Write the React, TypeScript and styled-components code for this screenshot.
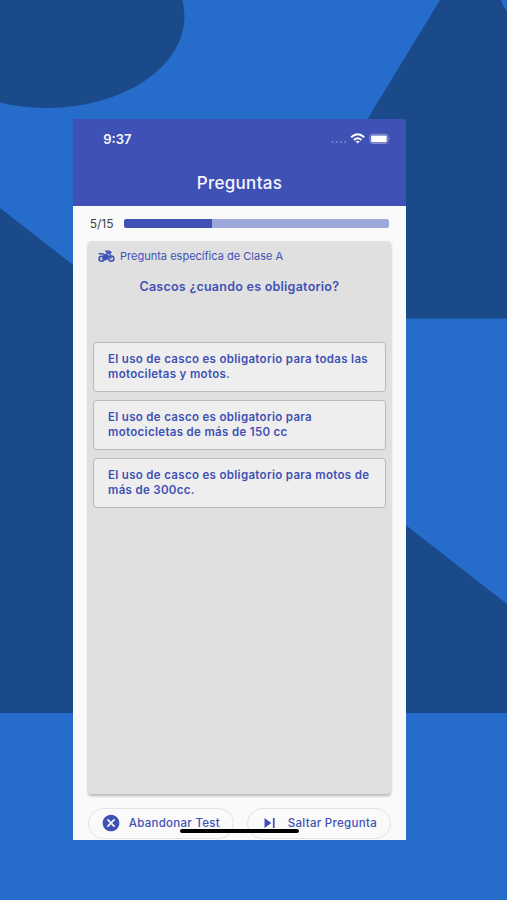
import React from "react";
import styled, { createGlobalStyle } from "styled-components";
import { MdCancel } from "react-icons/md";

const GlobalStyle = createGlobalStyle`
  * { box-sizing: border-box; }
  body { margin: 0; font-family: Inter, "Liberation Sans", sans-serif; }
`;

const indigo = "#3f51b5";

const Page = styled.main`
  position: relative;
  width: 507px;
  height: 900px;
  overflow: hidden;
  padding: 118.5px 0 0 72.7px;
  background: #266ccb;
`;

const Backdrop = styled.svg`
  position: absolute;
  inset: 0;
`;

const Phone = styled.section`
  position: relative;
  display: flex;
  flex-direction: column;
  width: 333.6px;
  height: 721.5px;
  overflow: hidden;
  background: #fafafa;
`;

const Header = styled.header`
  flex: none;
  height: 87.5px;
  background: ${indigo};
  color: #f5f6ff;
`;

const StatusBar = styled.div`
  display: flex;
  align-items: center;
  justify-content: space-between;
  height: 41px;
  padding: 0 16px 0 30.5px;
`;

const Clock = styled.span`
  font-size: 13px;
  font-weight: 600;
`;

const Title = styled.h1`
  margin: 12px 0 0;
  text-align: center;
  font-size: 17px;
  line-height: 22px;
  font-weight: 500;
  letter-spacing: 0.3px;
`;

const ProgressRow = styled.div`
  display: flex;
  align-items: center;
  flex: none;
  height: 35px;
  padding: 0 16.8px 0 17px;
`;

const Count = styled.span`
  width: 34px;
  font-size: 12px;
  color: #444;
`;

const Track = styled.div`
  flex: 1;
  height: 9px;
  overflow: hidden;
  border-radius: 2.5px;
  background: #9fa8da;
`;

const Fill = styled.div`
  height: 100%;
  background: ${indigo};
`;

const Card = styled.article`
  flex: none;
  height: 552.5px;
  margin: 0 15.5px 0 15.3px;
  padding: 7px 5px 0;
  border-radius: 4px;
  background: #e0e0e0;
  box-shadow: 0 2px 3px rgba(0, 0, 0, 0.28);
  color: ${indigo};
`;

const Category = styled.div`
  display: flex;
  align-items: center;
  gap: 5px;
  height: 16px;
  padding-left: 5px;
  font-size: 11px;
  letter-spacing: 0.01px;
`;

const Question = styled.h2`
  margin: 14px 0 46px;
  text-align: center;
  font-size: 12.5px;
  line-height: 18px;
  font-weight: 600;
  letter-spacing: 0.25px;
`;

const Options = styled.div`
  display: flex;
  flex-direction: column;
  gap: 8px;
`;

const Option = styled.button`
  height: 50px;
  padding: 0 0 1px 14px;
  border: 1px solid #b9b9b9;
  border-radius: 4px;
  background: #eee;
  color: ${indigo};
  text-align: left;
  font: 600 11.5px/15px Inter, sans-serif;
  letter-spacing: 0.32px;
  white-space: pre-line;
`;

const Actions = styled.footer`
  display: flex;
  flex: none;
  justify-content: space-between;
  margin: 14px 15.5px 0 15px;
`;

const Action = styled.button<{ $width: number }>`
  display: flex;
  align-items: center;
  gap: 7.5px;
  width: ${({ $width }) => $width}px;
  height: 31px;
  padding: 0 0 0 12.5px;
  border: 1px solid #e2e2e2;
  border-radius: 16px;
  background: #fafafa;
  color: ${indigo};
  font: 500 11.5px Inter, sans-serif;
  letter-spacing: 0.29px;
  white-space: nowrap;
`;

const HomeIndicator = styled.div`
  position: absolute;
  left: 107.5px;
  bottom: 7px;
  width: 119px;
  height: 4px;
  border-radius: 2px;
  background: #000;
`;

const answers = [
  "El uso de casco es obligatorio para todas las\nmotociletas y motos.",
  "El uso de casco es obligatorio para\nmotocicletas de más de 150 cc",
  "El uso de casco es obligatorio para motos de\nmás de 300cc.",
];

function StatusIcons() {
  return (
    <svg width="60" height="14" viewBox="0 0 60 14" fill="none">
      {[2, 6.2, 10.4, 14.6].map((x) => (
        <rect key={x} x={x - 0.5} y="9" width="2" height="1.8" rx=".7" fill="#fff" opacity=".32" />
      ))}
      <g stroke="#fff" strokeWidth="2">
        <path d="M21.2 5.2Q27.7 -.8 34.2 5.2" />
        <path d="M24 7.9Q27.7 4.5 31.4 7.9" />
      </g>
      <path d="M25.7 9.6Q27.7 8 29.7 9.6L27.7 11.6Z" fill="#fff" />
      <rect x="39.9" y="2.2" width="18" height="9.2" rx="2.5" stroke="#fff" strokeOpacity=".4" />
      <rect x="41.1" y="3.4" width="15.6" height="6.8" rx="1.2" fill="#fff" />
      <path d="M58.8 5.2Q60.4 6.8 58.8 8.4Z" fill="#fff" opacity=".45" />
    </svg>
  );
}

function MotorbikeIcon() {
  return (
    <svg width="17" height="13" viewBox="0 0 17 13" fill="none" stroke="currentColor">
      <circle cx="3.6" cy="8.8" r="2.5" strokeWidth="1.6" />
      <circle cx="13.3" cy="8.6" r="2.6" strokeWidth="1.6" />
      <path d="M.6 3.7H4.7L7 5.2L9.8 3.3L8.2 1.2H11.2L13.2 8.6" strokeWidth="1.5" />
      <path d="M10.3 3.6L13.4 1.8" strokeWidth="1.9" />
      <path d="M4 6.2L6.6 4.9H9.7L11 6L8.9 9.9H6.2Z" fill="currentColor" strokeWidth=".6" />
      <path d="M3.5 8.8H7.5" strokeWidth="1.3" />
    </svg>
  );
}

function SkipIcon() {
  return (
    <svg width="20" height="20" viewBox="0 0 20 20" fill="currentColor">
      <path d="M4.5 5L11.3 10L4.5 15Z" />
      <rect x="12.9" y="5" width="1.7" height="10" />
    </svg>
  );
}

export default function App() {
  return (
    <>
      <GlobalStyle />
      <Page>
        <Backdrop width="507" height="900" viewBox="0 0 507 900" fill="#1a4a89">
          <ellipse cx="47" cy="16.5" rx="137.5" ry="91.5" />
          <path d="M440 0H501Q503 7 507 11V318.5H246Z" />
          <path d="M0 208L253 405V713H0Z" />
          <path d="M253 406L507 604V713H253Z" />
        </Backdrop>
        <Phone>
          <Header>
            <StatusBar>
              <Clock>9:37</Clock>
              <StatusIcons />
            </StatusBar>
            <Title>Preguntas</Title>
          </Header>
          <ProgressRow>
            <Count>5/15</Count>
            <Track>
              <Fill style={{ width: `${(5 / 15) * 100}%` }} />
            </Track>
          </ProgressRow>
          <Card>
            <Category>
              <MotorbikeIcon />
              <span>Pregunta específica de Clase A</span>
            </Category>
            <Question>Cascos ¿cuando es obligatorio?</Question>
            <Options>
              {answers.map((answer) => (
                <Option key={answer}>{answer}</Option>
              ))}
            </Options>
          </Card>
          <Actions>
            <Action $width={146}>
              <MdCancel size={20} />
              Abandonar Test
            </Action>
            <Action $width={144}>
              <SkipIcon />
              Saltar Pregunta
            </Action>
          </Actions>
          <HomeIndicator />
        </Phone>
      </Page>
    </>
  );
}
